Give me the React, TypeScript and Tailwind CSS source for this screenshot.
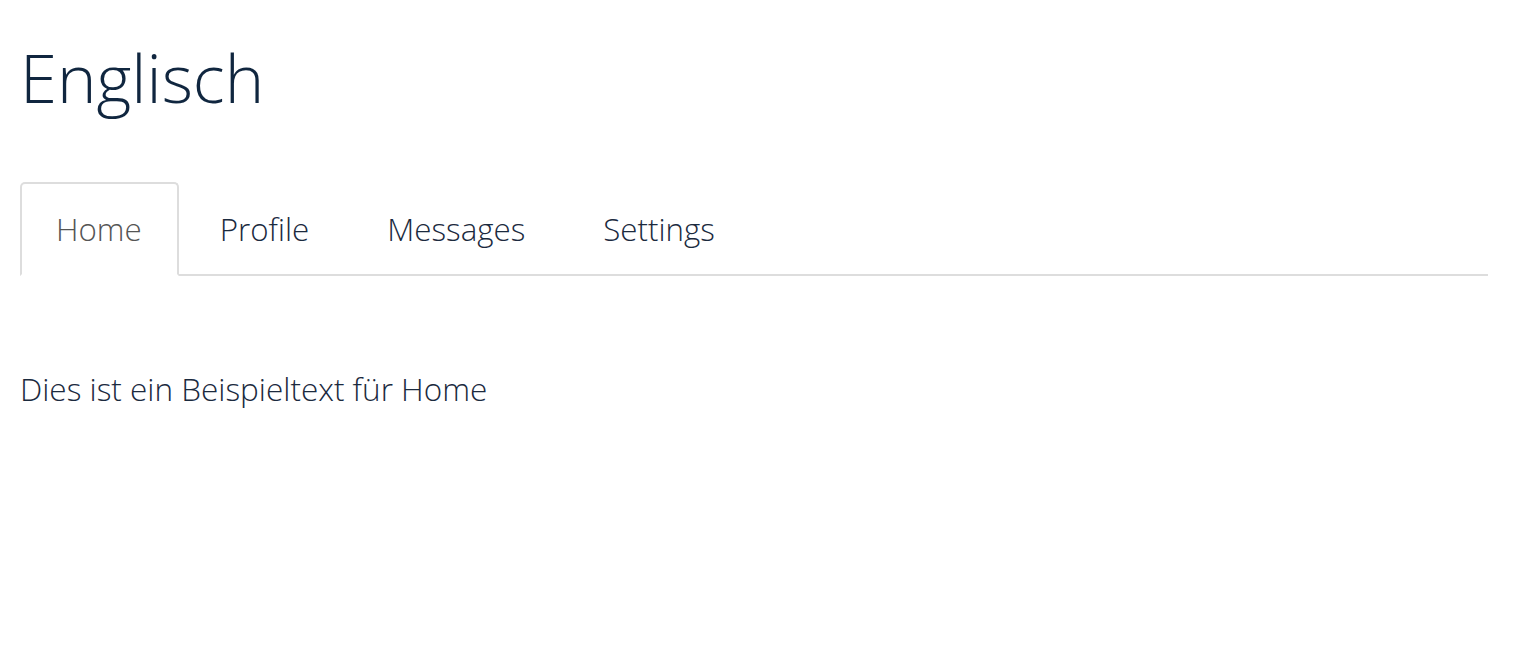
import React from "react";

export default function App() {
  const tabs = ["Home", "Profile", "Messages", "Settings"];
  return (
    <div
      className="min-h-[647px] bg-white pl-[20px] pr-[26px] font-light"
      style={{ fontFamily: '"Open Sans", sans-serif' }}
    >
      <h1 className="pt-[41px] text-[67px] leading-[72px] font-light text-[#10263f]">Englisch</h1>
      <ul className="mt-[69px] flex border-b-2 border-[#dddddd]">
        {tabs.map((t, i) => (
          <li key={t} className="-mb-[2px] mr-[5px]">
            <a
              className={
                i === 0
                  ? "block rounded-t-[5px] border-2 border-[#dddddd] border-b-white bg-white py-[21px] pl-[34px] pr-[35px] text-[31.3px] leading-[48px] text-[#555555]"
                  : "block rounded-t-[5px] border-2 border-transparent py-[21px] pl-[34px] pr-[35px] text-[31.3px] leading-[48px] text-[#1b2a3e]"
              }
            >
              {t}
            </a>
          </li>
        ))}
      </ul>
      <p className="mt-[89px] text-[31.5px] leading-[48px] text-[#1b2a3e]">Dies ist ein Beispieltext für Home</p>
    </div>
  );
}
